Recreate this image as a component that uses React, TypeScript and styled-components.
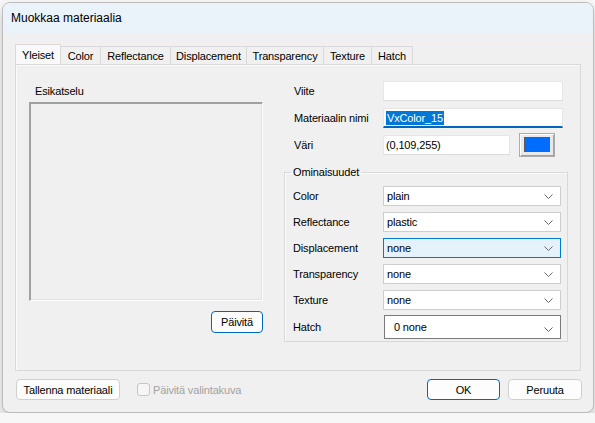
import React from "react"
import styled, { createGlobalStyle } from "styled-components"

const GlobalStyle = createGlobalStyle`
  html, body {
    margin: 0;
    padding: 0;
    background: #f7f7f7;
  }
  body {
    font-family: "Liberation Sans", Arial, sans-serif;
    font-size: 11px;
    letter-spacing: -0.15px;
    color: #000;
  }
  * {
    box-sizing: border-box;
  }
`

const Window = styled.div`
  margin: 2px 0 0 2px;
  width: 592px;
  height: 411px;
  border: 1px solid #bcbcbc;
  border-radius: 8px;
  overflow: hidden;
  background: #f0f0f0;
  display: flex;
  flex-direction: column;
  box-shadow: 0 7px 14px rgba(0, 0, 0, 0.2);
`

const TitleBar = styled.div`
  height: 30px;
  flex: none;
  background: #eaf3f9;
  display: flex;
  align-items: center;
  padding-left: 8px;
  font-size: 12px;
  letter-spacing: 0;
`

const Body = styled.div`
  padding: 11px 12px 0 12px;
  display: flex;
  flex-direction: column;
`

const TabStrip = styled.div`
  display: flex;
  align-items: flex-end;
  height: 20px;
`

const Tab = styled.div<{ $width: number; $active?: boolean }>`
  width: ${(p) => p.$width}px;
  height: ${(p) => (p.$active ? 20 : 18)}px;
  margin-right: -1px;
  border: 1px solid #d9d9d9;
  border-bottom: none;
  background: ${(p) => (p.$active ? "#f9f9f9" : "#f0f0f0")};
  display: flex;
  align-items: center;
  justify-content: center;
  position: relative;
  z-index: ${(p) => (p.$active ? 1 : 0)};
`

const Panel = styled.div`
  height: 307px;
  border: 1px solid #d9d9d9;
  box-shadow: inset 1px 1px 0 #fbfbfb;
  display: flex;
  align-items: flex-start;
  padding: 0 11px 0 13px;
  gap: 21px;
`

const PreviewColumn = styled.div`
  width: 234px;
  padding-top: 19px;
  display: flex;
  flex-direction: column;
`

const PreviewLabel = styled.div`
  line-height: 14px;
  margin-left: 6px;
`

const PreviewBox = styled.div`
  margin-top: 4px;
  height: 199px;
  border-top: 1px solid #a0a0a0;
  border-left: 1px solid #a0a0a0;
  border-bottom: 1px solid #fff;
  border-right: 1px solid #fff;
  box-shadow: inset 1px 1px 0 #a0a0a0, inset -1px -1px 0 #e3e3e3;
  background: #f0f0f0;
`

const Button = styled.button<{ $primary?: boolean; $width: number; $gap?: number }>`
  width: ${(p) => p.$width}px;
  height: 21px;
  margin-left: ${(p) => p.$gap ?? 0}px;
  padding: 0;
  border: 1px solid ${(p) => (p.$primary ? "#0067c0" : "#d0d0d0")};
  border-radius: 4px;
  background: #fdfdfd;
  font-family: inherit;
  font-size: 11px;
  letter-spacing: -0.15px;
  color: #000;
`

const RefreshButton = styled(Button)`
  align-self: flex-end;
  margin-top: 10px;
  height: 22px;
`

const FieldColumn = styled.div`
  width: 284px;
  padding-top: 16px;
  display: flex;
  flex-direction: column;
`

const FieldRow = styled.div<{ $height: number; $gap: number }>`
  display: flex;
  align-items: center;
  height: ${(p) => p.$height}px;
  margin-top: ${(p) => p.$gap}px;
`

const FieldLabel = styled.div<{ $width: number }>`
  width: ${(p) => p.$width}px;
  flex: none;
  padding-left: 10px;
`

const TextBox = styled.div<{ $width: number; $focused?: boolean }>`
  width: ${(p) => p.$width}px;
  height: 20px;
  background: #fff;
  border: 1px solid #e6e6e6;
  border-bottom: ${(p) => (p.$focused ? "2px solid #0067c0" : "1px solid #dcdcdc")};
  display: flex;
  align-items: center;
  padding-left: 2px;
`

const Selection = styled.span`
  background: #0078d7;
  color: #fff;
  padding: 1px 1px;
`

const ColorButton = styled.div`
  width: 36px;
  height: 24px;
  margin-left: 9px;
  border: 1px solid #adadad;
  background: #e9e9e9;
  box-shadow: inset 1px 1px 0 #fff, inset -1px -1px 0 #a0a0a0;
  padding: 3px 4px 4px 4px;
  display: flex;
`

const Swatch = styled.div<{ $color: string }>`
  flex: 1;
  background: ${(p) => p.$color};
  border: 1px solid #5c5c5c;
`

const GroupBox = styled.fieldset`
  margin: 8px 0 0 0;
  padding: 7px 6px 2px 8px;
  border: 1px solid #d8d8d8;
  box-shadow: inset 1px 1px 0 #fbfbfb;
  min-width: 0;
`

const GroupTitle = styled.legend`
  padding: 0 2px;
  margin-left: -2px;
  line-height: 14px;
`

const GroupLabel = styled.div`
  width: 90px;
  flex: none;
`

const Dropdown = styled.div<{ $focused?: boolean; $combo?: boolean }>`
  width: ${(p) => (p.$combo ? 180 : 179)}px;
  height: ${(p) => (p.$combo ? 24 : 20)}px;
  margin-left: ${(p) => (p.$combo ? 1 : 0)}px;
  background: ${(p) => (p.$focused ? "#e5f1fb" : "#fff")};
  border: 1px solid
    ${(p) => (p.$focused ? "#0078d7" : p.$combo ? "#7a7a7a" : "#cdcdcd")};
  display: flex;
  align-items: center;
  justify-content: space-between;
  padding: 0 7px 0 ${(p) => (p.$combo ? 9 : 3)}px;
`

const Chevron = styled.svg<{ $low?: boolean }>`
  flex: none;
  margin-top: ${(p) => (p.$low ? 4 : 1)}px;
`

const Footer = styled.div`
  display: flex;
  align-items: center;
  margin: 8px -1px 0 1px;
`

const CheckGroup = styled.label`
  display: flex;
  align-items: center;
  margin-left: 17px;
  color: #a2a2a2;
`

const CheckBox = styled.span`
  width: 13px;
  height: 13px;
  border: 1px solid #c6c6c6;
  border-radius: 3px;
  background: #f6f6f6;
  margin-right: 3px;
`

const FooterSpacer = styled.div`
  flex: 1;
`

const tabs = [
  { label: "Yleiset", width: 46 },
  { label: "Color", width: 41 },
  { label: "Reflectance", width: 71 },
  { label: "Displacement", width: 77 },
  { label: "Transparency", width: 78 },
  { label: "Texture", width: 49 },
  { label: "Hatch", width: 42 },
]

const properties = [
  { label: "Color", value: "plain" },
  { label: "Reflectance", value: "plastic" },
  { label: "Displacement", value: "none", focused: true },
  { label: "Transparency", value: "none" },
  { label: "Texture", value: "none" },
]

const ChevronIcon = ({ low }: { low?: boolean }) => (
  <Chevron $low={low} width="9" height="5" viewBox="0 0 9 5">
    <polyline points="0.5,0.5 4.5,4.5 8.5,0.5" fill="none" stroke="#6a6a6a" strokeWidth="1" />
  </Chevron>
)

const App = () => (
  <>
    <GlobalStyle />
    <Window>
      <TitleBar>Muokkaa materiaalia</TitleBar>
      <Body>
        <TabStrip>
          {tabs.map((t, i) => (
            <Tab key={t.label} $width={t.width} $active={i === 0}>
              {t.label}
            </Tab>
          ))}
        </TabStrip>
        <Panel>
          <PreviewColumn>
            <PreviewLabel>Esikatselu</PreviewLabel>
            <PreviewBox />
            <RefreshButton $primary $width={52}>
              Päivitä
            </RefreshButton>
          </PreviewColumn>
          <FieldColumn>
            <FieldRow $height={20} $gap={0}>
              <FieldLabel $width={99}>Viite</FieldLabel>
              <TextBox $width={180} />
            </FieldRow>
            <FieldRow $height={20} $gap={7}>
              <FieldLabel $width={99}>Materiaalin nimi</FieldLabel>
              <TextBox $width={180} $focused>
                <Selection>VxColor_15</Selection>
              </TextBox>
            </FieldRow>
            <FieldRow $height={24} $gap={5}>
              <FieldLabel $width={99}>Väri</FieldLabel>
              <TextBox $width={127}>(0,109,255)</TextBox>
              <ColorButton>
                <Swatch $color="rgb(0,109,255)" />
              </ColorButton>
            </FieldRow>
            <GroupBox>
              <GroupTitle>Ominaisuudet</GroupTitle>
              {properties.map((p, i) => (
                <FieldRow key={p.label} $height={20} $gap={i === 0 ? 0 : 6}>
                  <GroupLabel>{p.label}</GroupLabel>
                  <Dropdown $focused={p.focused}>
                    {p.value}
                    <ChevronIcon />
                  </Dropdown>
                </FieldRow>
              ))}
              <FieldRow $height={24} $gap={5}>
                <GroupLabel>Hatch</GroupLabel>
                <Dropdown $combo>
                  0 none
                  <ChevronIcon low />
                </Dropdown>
              </FieldRow>
            </GroupBox>
          </FieldColumn>
        </Panel>
        <Footer>
          <Button $width={104}>Tallenna materiaali</Button>
          <CheckGroup>
            <CheckBox />
            Päivitä valintakuva
          </CheckGroup>
          <FooterSpacer />
          <Button $primary $width={73}>
            OK
          </Button>
          <Button $width={74} $gap={8}>
            Peruuta
          </Button>
        </Footer>
      </Body>
    </Window>
  </>
)

export default App
